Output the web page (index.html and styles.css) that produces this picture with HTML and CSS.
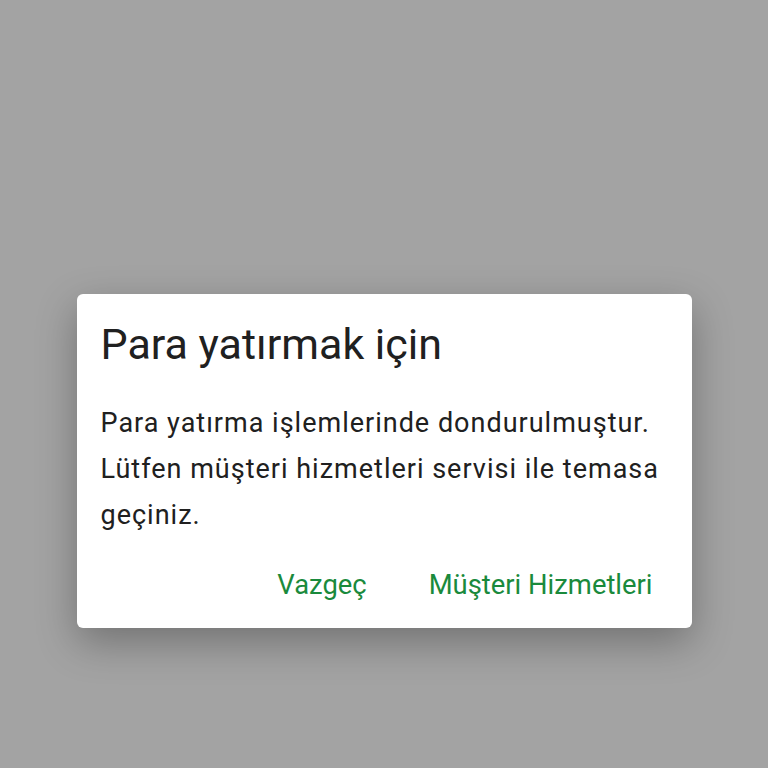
FILE: index.html
```html
<!DOCTYPE html>
<html lang="tr">
<head>
  <meta charset="UTF-8">
  <title>Para yatırmak için</title>
  <meta name="viewport" content="width=device-width, initial-scale=1.0">
  <link rel="stylesheet" href="styles.css">
</head>
<body>
<div class="screen">
  <!-- uyarı penceresi -->
  <div class="dialog">
    <div class="dialog-title">Para yatırmak için</div>
    <div class="dialog-message">Para yatırma işlemlerinde dondurulmuştur. Lütfen müşteri hizmetleri servisi ile temasa geçiniz.</div>
    <div class="dialog-actions">
      <button class="action">Vazgeç</button>
      <button class="action">Müşteri Hizmetleri</button>
    </div>
  </div>
</div>
</body>
</html>
```

FILE: styles.css
```css
* { box-sizing: border-box; }
html, body {
  margin: 0;
  padding: 0;
  height: 100%;
}
body {
  font-family: Roboto, 'Noto Sans', sans-serif;
  background-color: #a3a3a3;
}
.screen {
  display: flex;
  justify-content: center;
  padding-top: 294px;
}
.dialog {
  width: 615px;
  background-color: #fff;
  border-radius: 6px;
  padding: 25px 0 23px 24px;
  box-shadow: 0 14px 40px rgba(0, 0, 0, 0.3);
}
.dialog-title {
  font-size: 43px;
  line-height: 50px;
  color: #202020;
}
.dialog-message {
  margin-top: 31px;
  padding-right: 20px;
  font-size: 27px;
  letter-spacing: 1px;
  line-height: 46px;
  color: #202020;
}
.dialog-actions {
  display: flex;
  justify-content: flex-end;
  gap: 38px;
  margin-top: 27px;
  padding-right: 27px;
}
.action {
  background: none;
  border: none;
  padding: 0 12px;
  font-family: inherit;
  font-size: 27.4px;
  line-height: 40px;
  color: #1a8a3c;
  cursor: pointer;
}
```
